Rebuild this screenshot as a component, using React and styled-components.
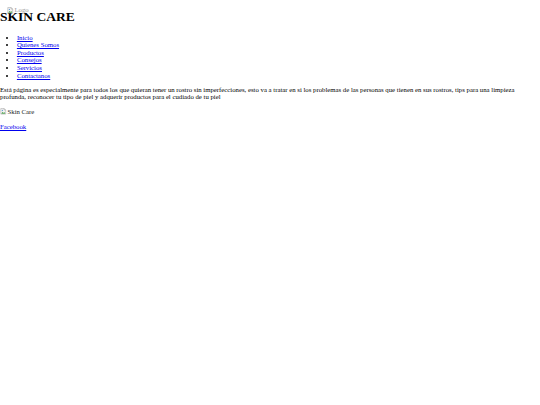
import React from 'react'
import styled, { createGlobalStyle } from 'styled-components'

const base = 6.75
const lh = 7.6

const GlobalStyle = createGlobalStyle`
  html, body {
    margin: 0;
    padding: 0;
    background: #ffffff;
  }
  body {
    font-family: "Liberation Serif", "Times New Roman", serif;
    font-size: ${base}px;
    color: #000000;
  }
`

const Page = styled.div`
  position: relative;
  display: flow-root;
  width: 540px;
`

const Logo = styled.span`
  position: absolute;
  left: 7px;
  top: 7px;
  display: inline-flex;
  align-items: center;
  gap: 1px;
  font-size: ${base}px;
  color: #9a9a9a;
  line-height: 1;
`

const Title = styled.h1`
  font-size: ${base * 2}px;
  line-height: 15.5px;
  font-weight: bold;
  margin: 8.5px 0 ${base * 2 * 0.67}px;
`

const Nav = styled.ul`
  list-style: disc;
  margin: ${base}px 0;
  padding: 0.5px 0 0 ${base * 2.5}px;
`

const Item = styled.li`
  line-height: ${lh}px;
`

const Link = styled.a`
  color: #0000ee;
  text-decoration: underline;
`

const Text = styled.p`
  margin: ${base}px 0;
  line-height: ${lh}px;
`

const Broken = styled.span`
  display: inline-flex;
  align-items: center;
  gap: 1px;
  color: #222;
`

const BrokenIcon = () => (
  <svg width="6.5" height="6.5" viewBox="0 0 16 16">
    <path d="M2 1h8l4 4v10H2z" fill="#f4f4f4" stroke="#9a9a9a" strokeWidth="1.2" />
    <path d="M10 1v4h4" fill="none" stroke="#9a9a9a" strokeWidth="1.2" />
    <path d="M3 14l3.5-5 2.5 3 2-2 2 4z" fill="#5aa85a" />
    <circle cx="6" cy="6" r="1.6" fill="#6aa0d8" />
  </svg>
)

export default function App() {
  return (
    <Page>
      <GlobalStyle />
      <header>
        <Title>SKIN CARE</Title>
        <Logo>
          <BrokenIcon />
          Logo
        </Logo>
      </header>
      <nav>
        <Nav>
          {['Inicio', 'Quienes Somos', 'Productos', 'Consejos', 'Servicios', 'Contactanos'].map((t) => (
            <Item key={t}>
              <Link href="#">{t}</Link>
            </Item>
          ))}
        </Nav>
      </nav>
      <Text>
        Está página es especialmente para todos los que quieran tener un rostro sin imperfecciones, esto va a
        tratar en si los problemas de las personas que tienen en sus rostros, tips para una limpieza profunda,
        reconocer tu tipo de piel y adquerir productos para el cudiado de tu piel
      </Text>
      <Text>
        <Broken>
          <BrokenIcon />
          Skin Care
        </Broken>
      </Text>
      <Text>
        <Link href="#">Facebook</Link>
      </Text>
    </Page>
  )
}
